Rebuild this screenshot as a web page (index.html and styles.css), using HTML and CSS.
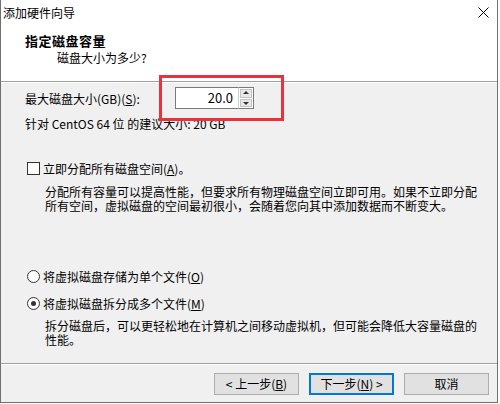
FILE: index.html
```html
<!DOCTYPE html>
<html>
<head>
  <title>添加硬件向导</title>
  <meta charset="utf-8">
  <link rel="stylesheet" href="styles.css">
</head>
<body>
  <div class="window">
    <div class="top">
      <div class="titlebar">
        <span class="title">添加硬件向导</span>
        <svg class="close" width="11" height="11" viewBox="0 0 11 11">
          <path d="M0.5 0.5 L10.5 10.5 M10.5 0.5 L0.5 10.5" stroke="#000" stroke-width="1" fill="none"/>
        </svg>
      </div>
      <div class="heading">指定磁盘容量</div>
      <div class="subheading">磁盘大小为多少?</div>
    </div>

    <div class="content">
      <div class="size-row">
        <label class="size-label">最大磁盘大小(GB)(<u>S</u>):</label>
        <div class="spin">
          <div class="spin-input">20.0</div>
          <div class="spin-buttons">
            <span class="spin-btn up"></span>
            <span class="spin-btn down"></span>
          </div>
        </div>
      </div>
      <div class="hint">针对 CentOS 64 位 的建议大小: 20 GB</div>

      <label class="option check-row"><span class="checkbox"></span>立即分配所有磁盘空间(<u>A</u>)。</label>
      <p class="note note-alloc">分配所有容量可以提高性能，但要求所有物理磁盘空间立即可用。如果不立即分配<br>所有空间，虚拟磁盘的空间最初很小，会随着您向其中添加数据而不断变大。</p>

      <label class="option radio-row single"><span class="radio"></span>将虚拟磁盘存储为单个文件(<u>O</u>)</label>
      <label class="option radio-row"><span class="radio checked"></span>将虚拟磁盘拆分成多个文件(<u>M</u>)</label>
      <p class="note note-split">拆分磁盘后，可以更轻松地在计算机之间移动虚拟机，但可能会降低大容量磁盘的<br>性能。</p>
    </div>

    <div class="footer">
      <button class="btn">&lt; 上一步(<u>B</u>)</button>
      <button class="btn default">下一步(<u>N</u>) &gt;</button>
      <button class="btn">取消</button>
    </div>

    <div class="highlight"></div>
  </div>
</body>
</html>
```

FILE: styles.css
```css
body {
  margin: 0;
  background-color: #ffffff;
  font-family: "Noto Sans CJK SC", "Noto Sans", sans-serif;
  font-size: 12px;
  color: #000;
}

.window {
  position: relative;
  width: 498px;
  height: 403px;
  box-sizing: border-box;
  border-left: 1px solid #707070;
  border-right: 1px solid #707070;
  border-bottom: 1px solid #707070;
  display: flex;
  flex-direction: column;
  background-color: #f0f0f0;
}

.top {
  height: 81px;
  background-color: #ffffff;
  border-bottom: 1px solid #a0a0a0;
  flex-shrink: 0;
}

.titlebar {
  height: 25px;
  display: flex;
  justify-content: space-between;
  align-items: center;
  padding: 0 8px 0 2px;
}

.title {
  line-height: 25px;
}

.close {
  display: block;
  margin-top: -1px;
}

.heading {
  margin: 7px 0 0 24px;
  font-size: 13px;
  font-weight: bold;
  letter-spacing: 0.5px;
  line-height: 17px;
}

.subheading {
  margin-left: 56px;
  line-height: 17px;
}

.content {
  flex: 1;
  border-top: 1px solid #ffffff;
  border-bottom: 1px solid #a0a0a0;
  padding-left: 24px;
}

.size-row {
  display: flex;
  align-items: center;
  margin-top: 4px;
  height: 22px;
}

.size-label {
  width: 150px;
  line-height: 17px;
}

.spin {
  display: flex;
  height: 22px;
}

.spin-input {
  width: 63px;
  box-sizing: border-box;
  border: 1px solid #7a7a7a;
  border-right: none;
  background-color: #ffffff;
  text-align: right;
  padding-right: 5px;
  line-height: 20px;
  font-size: 13px;
}

.spin-buttons {
  width: 16px;
  box-sizing: border-box;
  border: 1px solid #7a7a7a;
  border-left: 1px solid #cfcfcf;
  background-color: #ffffff;
  display: flex;
  flex-direction: column;
  padding: 1px;
  gap: 1px;
}

.spin-btn {
  flex: 1;
  background-color: #e8e8e8;
  border: 1px solid #c4c4c4;
  position: relative;
}

.spin-btn::after {
  content: "";
  position: absolute;
  left: 50%;
  top: 50%;
  margin-left: -3px;
  border-left: 3px solid transparent;
  border-right: 3px solid transparent;
}

.spin-btn.up::after {
  margin-top: -2px;
  border-bottom: 3px solid #333;
}

.spin-btn.down::after {
  margin-top: -1px;
  border-top: 3px solid #333;
}

.hint {
  margin-top: 6px;
  line-height: 17px;
}

.option {
  display: flex;
  align-items: center;
  line-height: 17px;
  margin-left: 2px;
}

.check-row {
  margin-top: 28px;
}

.checkbox {
  width: 13px;
  height: 13px;
  box-sizing: border-box;
  border: 1px solid #333;
  background-color: #ffffff;
  margin-right: 3px;
}

.radio {
  width: 13px;
  height: 13px;
  box-sizing: border-box;
  border: 1px solid #333;
  border-radius: 50%;
  background-color: #ffffff;
  margin-right: 3px;
  display: flex;
  align-items: center;
  justify-content: center;
}

.radio.checked::after {
  content: "";
  width: 5px;
  height: 5px;
  border-radius: 50%;
  background-color: #333;
}

.note {
  margin: 0 0 0 20px;
  line-height: 14px;
  white-space: nowrap;
}

.note-alloc {
  margin-top: 8px;
}

.radio-row.single {
  margin-top: 55px;
}

.radio-row + .radio-row {
  margin-top: 10px;
}

.note-split {
  margin-top: 7px;
}

.footer {
  height: 38px;
  flex-shrink: 0;
  border-top: 1px solid #ffffff;
  display: flex;
  justify-content: flex-end;
  align-items: flex-start;
  gap: 10px;
  padding: 8px 8px 0 0;
  box-sizing: border-box;
}

.btn {
  width: 85px;
  height: 22px;
  box-sizing: border-box;
  background-color: #e1e1e1;
  border: 1px solid #adadad;
  font-family: "Noto Sans CJK SC", "Noto Sans", sans-serif;
  font-size: 12px;
  color: #000;
  padding: 0;
  line-height: 18px;
}

.btn.default {
  border: 2px solid #0078d7;
}

.highlight {
  position: absolute;
  left: 158px;
  top: 75px;
  width: 125px;
  height: 46px;
  box-sizing: border-box;
  border: 3px solid #e8323c;
}
```
